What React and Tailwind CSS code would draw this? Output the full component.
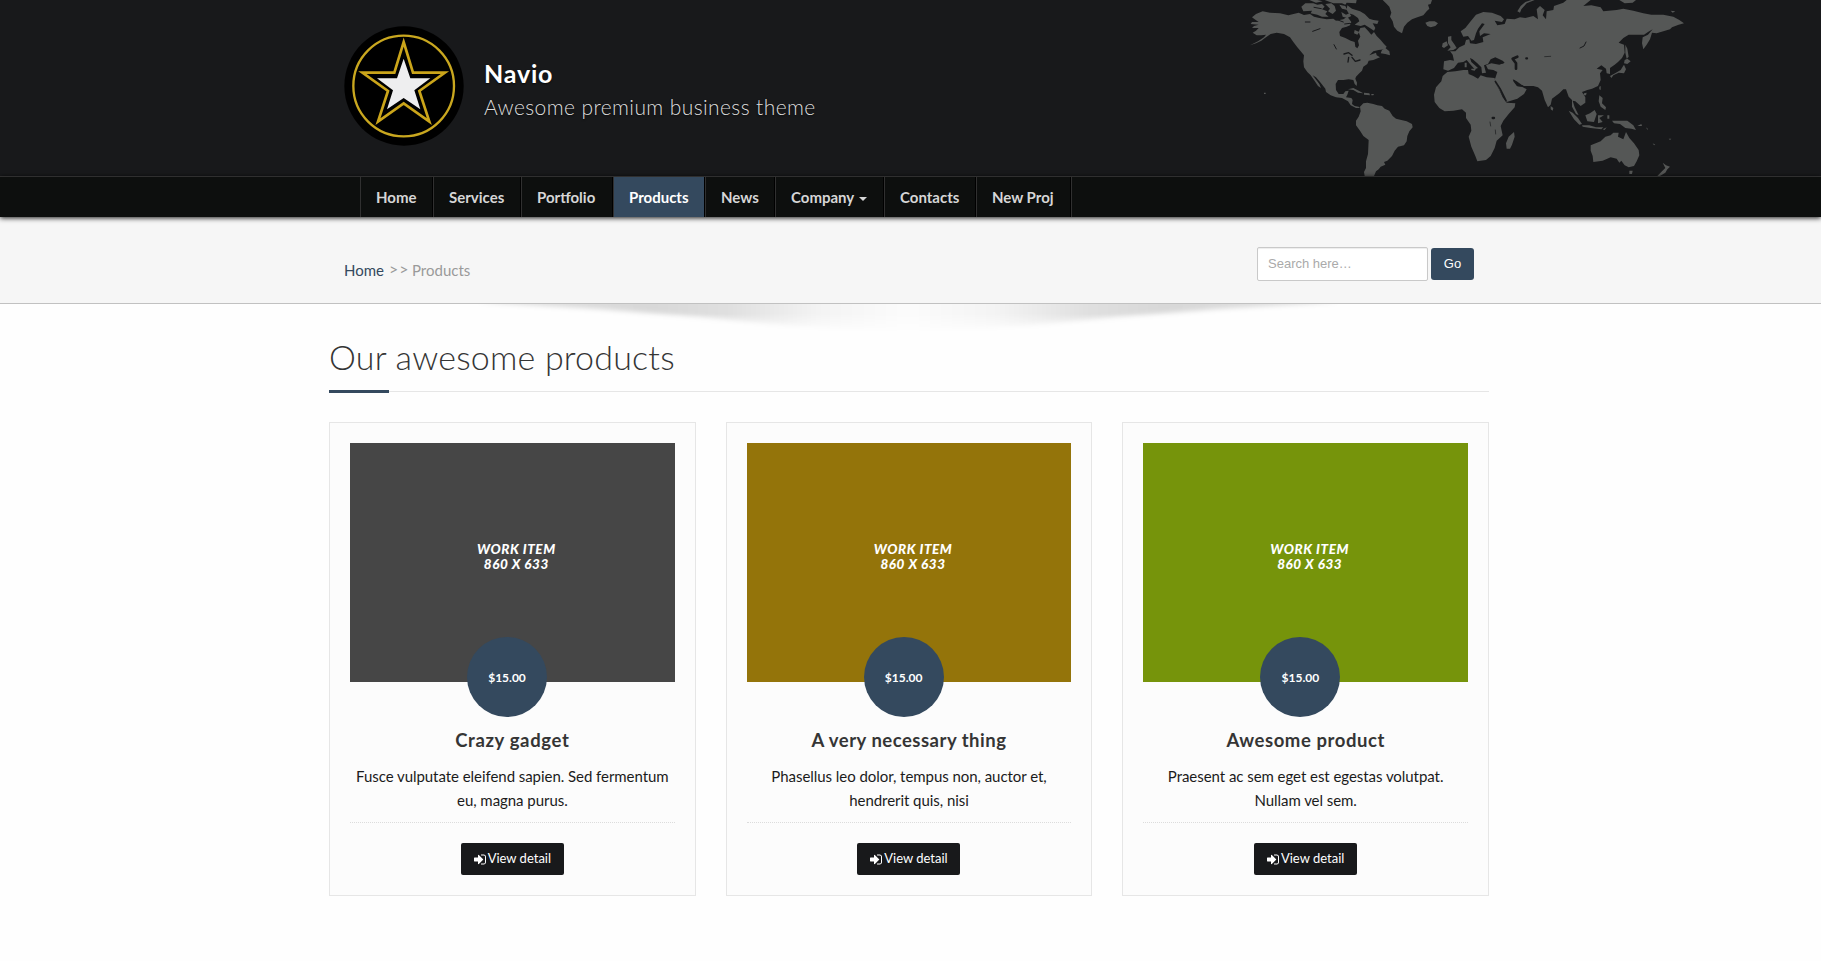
import React from "react";

const NAV_ITEMS = [
  { label: "Home", width: "w-[73px]" },
  { label: "Services", width: "w-[88px]" },
  { label: "Portfolio", width: "w-[92px]" },
  { label: "Products", width: "w-[92px]", active: true },
  { label: "News", width: "w-[70px]" },
  { label: "Company", width: "w-[109px]", caret: true },
  { label: "Contacts", width: "w-[92px]" },
  { label: "New Proj", width: "w-[95px]" },
];

const PRODUCTS = [
  {
    title: "Crazy gadget",
    spacing: "tracking-[0.65px]",
    lines: ["Fusce vulputate eleifend sapien. Sed fermentum", "eu, magna purus."],
    color: "bg-[#464646]",
  },
  {
    title: "A very necessary thing",
    spacing: "tracking-[0.5px]",
    lines: ["Phasellus leo dolor, tempus non, auctor et,", "hendrerit quis, nisi"],
    color: "bg-[#94740a]",
  },
  {
    title: "Awesome product",
    spacing: "tracking-[0.57px]",
    lines: ["Praesent ac sem eget est egestas volutpat.", "Nullam vel sem."],
    color: "bg-[#76940b]",
  },
];

function Logo() {
  return (
    <svg className="h-[120px] w-[120px] shrink-0" viewBox="0 0 360 360">
      <circle cx="180" cy="180" r="179" fill="#000" />
      <circle cx="179" cy="180" r="151" fill="none" stroke="#c9a71f" strokeWidth="7" />
      <path
        d="M179 48 L207 140 H303 L226 195 L256 287 L179 232 L102 287 L132 195 L55 140 H151 Z"
        fill="#000"
        stroke="#cba51a"
        strokeWidth="8"
      />
      <path
        d="M179 98 L199 157 H259 L211 193 L229 250 L179 216 L129 250 L147 193 L99 157 H159 Z"
        fill="#eeeeef"
      />
    </svg>
  );
}

function WorldMap() {
  return (
    <svg className="h-[176px] w-[470px]" viewBox="0 0 1410 528">
      <g fill="#555756">
        {/* North and Central America */}
        <path d="M66 52 L78 42 L98 34 L120 38 L150 40 L175 46 L206 38 L222 45 L240 42 L252 50 L268 54 L290 58 L310 56 L318 62 L340 58 L352 50 L364 66 L360 76 L350 80 L336 84 L328 96 L330 108 L346 114 L362 122 L374 126 L376 140 L382 145 L387 136 L384 122 L391 110 L386 96 L391 84 L404 82 L414 92 L424 104 L432 96 L440 108 L452 120 L462 132 L470 140 L464 148 L446 150 L430 154 L418 166 L438 158 L440 166 L450 172 L430 180 L416 182 L412 192 L400 200 L396 212 L388 220 L378 230 L376 236 L381 248 L380 258 L374 252 L370 240 L356 238 L340 240 L324 240 L317 252 L318 270 L326 282 L340 282 L346 274 L356 272 L352 284 L348 292 L364 294 L368 300 L366 312 L374 318 L386 320 L390 324 L378 324 L362 316 L354 304 L336 294 L318 292 L302 286 L288 276 L286 266 L272 248 L258 232 L248 226 L268 252 L273 264 L264 258 L252 240 L242 226 L232 216 L222 202 L220 184 L222 166 L214 156 L202 142 L190 126 L180 112 L162 102 L140 98 L122 102 L108 112 L94 122 L78 130 L60 136 L84 124 L102 112 L108 104 L94 106 L80 106 L68 98 L78 92 L86 84 L66 84 L72 78 L86 74 L62 72 L66 66 L86 66 L74 58 Z" />
        <path d="M250 10 L262 14 L276 12 L284 20 L276 28 L292 34 L286 42 L296 50 L276 50 L262 44 L242 40 L246 32 L220 34 L214 20 L226 10 Z M286 12 L304 10 L314 18 L318 32 L308 42 L294 34 L300 26 Z M238 0 H262 L278 4 L258 8 Z M284 0 H380 L378 10 L350 8 L346 14 L336 10 L310 10 Z M328 14 L346 18 L352 30 L336 26 Z M334 36 L348 44 L358 40 L364 48 L352 54 L338 50 Z M352 16 L366 26 L390 34 L404 42 L418 56 L430 60 L446 62 L442 72 L428 70 L436 84 L432 92 L416 82 L404 74 L392 78 L374 74 L388 64 L384 54 L370 44 L356 40 L350 30 Z M374 90 L388 96 L382 104 L372 100 Z" />
        <path d="M456 150 L466 144 L478 154 L480 166 L466 162 L452 160 Z M354 268 L370 264 L386 272 L400 280 L384 278 L370 270 Z M402 278 L418 280 L420 286 L402 284 Z M424 282 L432 282 L430 286 L424 286 Z M102 278 h5 v4 h-5 Z" />
        {/* South America */}
        <path d="M390 320 L400 310 L412 308 L430 312 L442 316 L456 318 L464 326 L478 332 L488 348 L498 356 L514 360 L530 364 L546 372 L548 382 L538 394 L532 408 L530 424 L522 436 L504 440 L494 452 L486 468 L472 482 L462 486 L466 494 L452 500 L446 508 L438 514 L432 528 L404 528 L402 516 L408 504 L408 484 L414 462 L416 420 L400 408 L390 392 L378 376 L378 362 L386 350 L392 334 Z" />
        {/* Greenland and Iceland */}
        <path d="M458 0 H606 L602 12 L594 14 L598 26 L590 34 L580 46 L562 52 L546 58 L532 68 L522 80 L516 100 L502 92 L492 80 L488 64 L480 50 L484 38 L478 20 L468 10 Z M586 68 L598 64 L614 64 L624 70 L616 78 L602 82 L592 78 Z" />
        {/* Europe and Asia */}
        <path d="M642 184 L660 180 L672 182 L668 164 L660 154 L676 154 L688 142 L704 134 L708 120 L718 118 L720 130 L738 132 L760 126 L758 112 L782 102 L762 100 L750 108 L748 94 L764 72 L756 70 L744 86 L738 100 L732 120 L724 122 L714 108 L700 110 L692 94 L706 84 L722 64 L738 44 L760 36 L786 38 L812 48 L822 58 L816 66 L794 62 L802 76 L824 72 L830 56 L854 58 L870 52 L886 54 L910 48 L924 58 L920 28 L930 18 L944 30 L938 46 L948 58 L950 34 L970 30 L972 18 L1000 8 L1010 0 L1082 0 L1060 18 L1084 16 L1112 22 L1120 34 L1160 30 L1180 26 L1210 32 L1240 40 L1264 44 L1300 44 L1330 50 L1348 60 L1362 70 L1346 74 L1326 82 L1320 88 L1300 94 L1280 100 L1266 98 L1260 118 L1250 134 L1240 148 L1236 130 L1238 112 L1254 104 L1268 88 L1254 96 L1242 104 L1220 104 L1196 104 L1180 114 L1166 128 L1182 134 L1184 158 L1176 174 L1164 186 L1154 194 L1140 204 L1140 222 L1130 220 L1128 206 L1114 196 L1100 206 L1118 210 L1110 220 L1112 240 L1104 258 L1086 266 L1072 270 L1056 276 L1066 292 L1066 308 L1052 318 L1036 304 L1028 302 L1034 322 L1046 346 L1038 342 L1026 320 L1026 300 L1016 290 L1008 268 L1000 268 L988 280 L966 296 L962 314 L954 322 L944 300 L936 272 L924 262 L910 258 L880 258 L860 244 L848 238 L862 258 L876 260 L890 268 L882 282 L862 296 L830 306 L816 282 L800 256 L794 240 L802 216 L790 210 L774 208 L768 196 L784 190 L808 194 L824 188 L818 182 L796 172 L782 178 L774 192 L762 196 L768 218 L756 220 L754 202 L742 190 L728 178 L720 174 L724 186 L744 204 L734 208 L722 194 L710 180 L700 186 L684 188 L672 204 L654 212 L640 208 Z" />
        <path d="M654 110 L664 108 L664 120 L674 134 L680 144 L670 150 L652 152 L662 142 L654 130 Z M638 130 L650 124 L654 136 L642 144 L636 140 Z M862 34 L872 18 L886 6 L904 0 H914 L890 10 L874 28 L870 38 Z M704 188 L710 188 L710 202 L704 202 Z M724 206 L738 206 L734 212 L724 210 Z M1168 0 H1218 L1208 8 L1184 10 Z M1322 32 L1336 34 L1328 38 Z" />
        <path d="M1186 134 L1192 146 L1196 170 L1190 176 L1186 158 Z M1184 180 L1192 176 L1202 184 L1192 192 L1182 190 Z M1182 194 L1188 208 L1182 220 L1166 218 L1150 226 L1144 234 L1140 228 L1158 218 L1172 210 L1178 200 Z M1108 260 L1112 258 L1112 270 L1108 268 Z M1062 280 L1070 278 L1068 286 L1060 286 Z M962 318 L970 324 L968 332 L962 328 Z" />
        {/* Africa */}
        <path d="M652 216 L676 214 L700 210 L714 210 L716 222 L730 228 L744 236 L752 226 L770 232 L794 234 L796 248 L808 270 L818 292 L830 308 L856 310 L854 322 L836 342 L820 362 L812 378 L818 406 L800 422 L794 444 L782 468 L768 480 L742 484 L736 468 L724 440 L716 410 L724 392 L722 374 L708 354 L708 338 L696 328 L670 332 L644 334 L628 324 L614 306 L612 284 L618 262 L634 244 L638 228 Z M852 396 L854 410 L846 434 L840 446 L830 446 L828 430 L836 410 Z" />
        {/* Southeast Asia and Oceania */}
        <path d="M1016 332 L1028 338 L1044 354 L1056 372 L1048 374 L1032 358 Z M1056 376 L1078 376 L1098 382 L1120 382 L1114 388 L1082 384 L1058 380 Z M1066 346 L1080 340 L1094 330 L1100 342 L1092 366 L1072 364 Z M1104 346 L1122 346 L1108 354 L1118 366 L1104 370 Z M1108 286 L1118 294 L1116 310 L1128 322 L1126 330 L1112 320 L1106 304 Z M1146 362 L1158 362 L1172 362 L1192 362 L1210 376 L1218 390 L1204 386 L1186 384 L1170 372 L1152 370 Z M1118 388 L1130 382 L1124 390 Z M1132 346 h6 v10 h-6 Z M1222 378 L1234 372 L1236 378 Z M1248 382 l6 5 l-2 2 Z M1268 430 l8 4 l-4 2 Z M1316 416 h8 l-4 4 Z" />
        <path d="M1082 436 L1112 424 L1126 410 L1142 406 L1150 398 L1166 398 L1164 410 L1180 418 L1188 396 L1198 414 L1212 430 L1226 450 L1228 466 L1220 484 L1212 498 L1196 502 L1184 496 L1174 482 L1168 488 L1160 476 L1142 472 L1118 482 L1090 486 L1088 468 L1082 452 Z M1198 512 L1208 512 L1206 522 L1198 522 Z M1298 488 L1308 496 L1320 500 L1312 508 L1306 518 L1290 528 H1282 L1296 514 L1306 504 Z" />
      </g>
      {/* Lakes and inland seas */}
      <g fill="none" stroke="#18191b" strokeLinecap="round" strokeLinejoin="round">
        <path d="M794 178 L792 184 L806 184 L818 188" strokeWidth="6" />
        <path d="M862 170 L848 176 L858 190 L858 206" strokeWidth="8" />
        <path d="M1068 126 L1062 138 L1050 144" strokeWidth="3" />
        <path d="M796 244 L810 266 L828 302" strokeWidth="5" />
        <path d="M852 242 L862 256 L878 258" strokeWidth="5" />
        <path d="M342 162 L356 158 L366 166 M356 172 L354 186 M366 172 L376 184 L390 180" strokeWidth="4" />
        <path d="M312 134 L319 147 M248 94 L270 86 M226 66 L240 66" strokeWidth="3" />
        <path d="M788 354 h4 M889 175 h2" strokeWidth="7" />
        <path d="M780 366 L782 378 M796 390 L797 402 M944 170 L962 169" strokeWidth="2" />
        <path d="M318 58 L340 66 M344 72 L360 70 L372 76 M366 52 L384 62 M300 44 L320 50 M252 22 L274 26" strokeWidth="3" />
      </g>
    </svg>
  );
}

function SignInIcon() {
  return (
    <svg className="h-[11px] w-[12px] shrink-0" viewBox="0 64 1536 1280" fill="currentColor">
      <path d="M1184 704q0 26-19 45l-544 544q-19 19-45 19t-45-19-19-45v-288h-448q-26 0-45-19t-19-45v-384q0-26 19-45t45-19h448v-288q0-26 19-45t45-19 45 19l544 544q19 19 19 45zm352-352v704q0 119-84.500 203.500t-203.500 84.500h-320q-13 0-22.500-9.500t-9.500-22.500q0-4-1-20t-.5-26.500 3-23.500 10-19.500 20.500-6.500h320q66 0 113-47t47-113v-704q0-66-47-113t-113-47h-312l-11.500-1-11.500-3-8-5.500-7-9-2-13.500q0-4-1-20t-.5-26.500 3-23.500 10-19.500 20.500-6.500h320q119 0 203.500 84.500t84.500 203.500z" />
    </svg>
  );
}

function SectionShadow() {
  return (
    <svg className="block h-[36px] w-[900px]" viewBox="-20 0 900 36">
      <defs>
        <linearGradient id="shade" gradientUnits="userSpaceOnUse" x1="0" x2="860" y1="0" y2="0">
          <stop offset="0" stopColor="#000" stopOpacity="0.12" />
          <stop offset="0.2" stopColor="#000" stopOpacity="0.15" />
          <stop offset="0.29" stopColor="#000" stopOpacity="0.12" />
          <stop offset="0.4" stopColor="#000" stopOpacity="0.04" />
          <stop offset="0.5" stopColor="#000" stopOpacity="0.01" />
          <stop offset="0.6" stopColor="#000" stopOpacity="0.04" />
          <stop offset="0.71" stopColor="#000" stopOpacity="0.12" />
          <stop offset="0.8" stopColor="#000" stopOpacity="0.15" />
          <stop offset="1" stopColor="#000" stopOpacity="0.12" />
        </linearGradient>
        <linearGradient id="fade" x1="0" x2="0" y1="0" y2="1">
          <stop offset="0.3" stopColor="#fff" />
          <stop offset="0.85" stopColor="#fff" stopOpacity="0.15" />
          <stop offset="1" stopColor="#fff" stopOpacity="0" />
        </linearGradient>
        <mask id="fall" maskUnits="userSpaceOnUse" x="-20" y="0" width="900" height="36">
          <rect x="-20" width="900" height="32" fill="url(#fade)" />
        </mask>
        <filter id="soften" x="-5%" y="-50%" width="110%" height="200%">
          <feGaussianBlur stdDeviation="3 2.5" />
        </filter>
      </defs>
      <g mask="url(#fall)">
        <path d="M0 -2 L120 5 L220 13 L310 22 Q430 34 550 22 L640 13 L740 5 L860 -2 L740 -12 H120 Z" fill="url(#shade)" filter="url(#soften)" />
      </g>
    </svg>
  );
}

function ProductCard({ product }) {
  return (
    <article className="flex h-[474px] flex-col border border-[#e6e6e6] bg-[#fcfcfc] p-5 text-center">
      <div className={`relative flex h-[239px] shrink-0 flex-col items-center pt-[99px] ${product.color}`}>
        <div className="pl-[8px] text-[13.5px] leading-[15px] font-black text-white italic">
          <div className="tracking-[0.55px]">WORK ITEM</div>
          <div className="tracking-[0.55px]">860 X 633</div>
        </div>
        <div className="absolute top-[194px] left-[117px] flex h-20 w-20 items-center justify-center rounded-full bg-[#34495e] text-xs font-bold text-white">
          <span className="pt-0.5">$15.00</span>
        </div>
      </div>
      <h3 className={`mt-[46px] text-[18.5px] leading-6 font-bold text-[#353535] ${product.spacing}`}>{product.title}</h3>
      <p className="mt-3 text-[15px] leading-6 tracking-[-0.05px] whitespace-nowrap text-[#1b1b1b]">
        {product.lines[0]}
        <br />
        {product.lines[1]}
      </p>
      <div className="mt-[10px] border-t border-dotted border-[#dcdcdc]" />
      <button className="mx-auto mt-5 flex h-8 w-[103px] items-center justify-center gap-[2px] rounded-[2px] bg-[#18191b] text-[13px] whitespace-nowrap text-white">
        <SignInIcon />
        <span>View detail</span>
      </button>
    </article>
  );
}

export default function App() {
  return (
    <div className="h-[961px] overflow-hidden bg-[#fefefe] font-['Lato',sans-serif]">
      <header className="h-[176px] bg-[#18191b]">
        <div className="flex justify-between pr-[121px] pl-[344px]">
          <div className="flex pt-[26px]">
            <Logo />
            <div className="pt-[31px] pl-5 text-white [text-shadow:0_1px_2px_rgba(0,0,0,0.6)]">
              <h1 className="text-[25px] leading-8 font-bold tracking-[0.8px]">Navio</h1>
              <p className="pt-0.5 text-[21px] leading-8 font-light tracking-[0.4px] text-[#dddddd]">Awesome premium business theme</p>
            </div>
          </div>
          <WorldMap />
        </div>
      </header>

      <nav className="relative z-10 flex h-[41px] border-t border-[#2f2f2f] bg-[#0d0f0e] pl-[360px] shadow-[0_1px_5px_rgba(0,0,0,0.9)]">
        {NAV_ITEMS.map((item) => (
          <a
            key={item.label}
            className={`flex h-10 items-center border-r border-l border-r-black border-l-[#303030] pl-[15px] text-[15px] font-bold ${item.width} ${
              item.active ? "bg-[#34495e] text-white" : "text-[#d6d6d6]"
            }`}
          >
            {item.label}
            {item.caret && <span className="mt-[3px] ml-[5px] border-x-4 border-t-4 border-x-transparent border-t-[#d6d6d6]" />}
          </a>
        ))}
        <div className="h-10 w-px bg-[#303030]" />
      </nav>

      <section className="flex h-[87px] justify-between border-b border-[#c1c1c1] bg-[#f6f6f6] pr-[347px] pl-[344px]">
        <div className="flex pt-[41px] text-[15px] leading-6 text-[#9a9a9a]">
          <a className="w-[45px] text-[#34495e]">Home</a>
          <span className="-mt-px w-[23px] text-[16px] tracking-[1px]">&gt;&gt;</span>
          <span>Products</span>
        </div>
        <form className="flex items-start gap-[3px] pt-[30px] font-['Liberation_Sans',sans-serif] text-[13px]">
          <input
            placeholder="Search here…"
            className="h-[34px] w-[171px] rounded-[2px] border border-[#c9c9c9] bg-white px-[10px] pb-0.5 shadow-[inset_0_1px_1px_rgba(0,0,0,0.075)] outline-none placeholder:text-[#aaaaaa]"
          />
          <button type="button" className="mt-px h-8 w-[43px] rounded-[3px] bg-[#34495e] text-white">
            Go
          </button>
        </form>
      </section>

      <main className="pr-[332px] pl-[329px]">
        <div className="-mb-[36px] flex justify-center pr-0.5">
          <SectionShadow />
        </div>
        <div className="h-[88px] border-b border-[#e6e6e6] pt-[29px]">
          <h2 className="text-[34px] leading-[48px] font-light tracking-[0.2px] whitespace-nowrap text-[#353535]">Our awesome products</h2>
          <div className="relative top-[9px] h-[3px] w-[60px] bg-[#34495e]" />
        </div>
        <div className="mt-[30px] grid grid-cols-3 gap-[30px]">
          {PRODUCTS.map((product) => (
            <ProductCard key={product.title} product={product} />
          ))}
        </div>
      </main>
    </div>
  );
}
